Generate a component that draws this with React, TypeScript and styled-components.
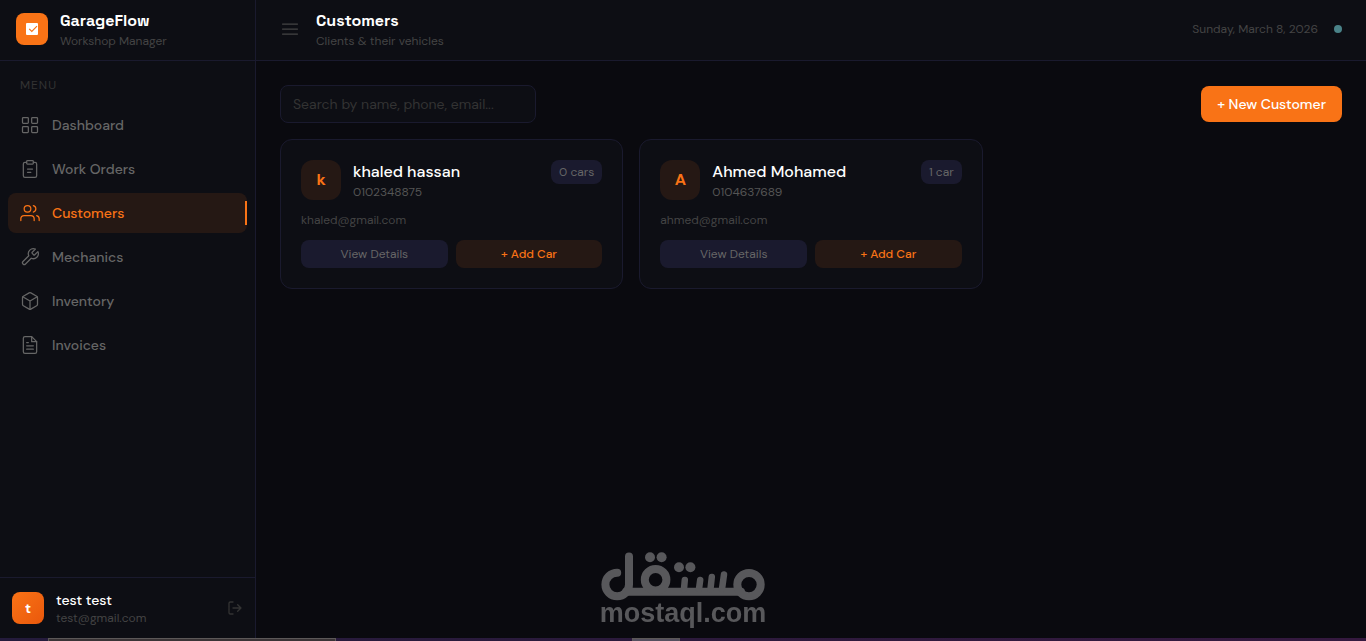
import React from "react";
import styled, { createGlobalStyle } from "styled-components";

const color = {
  page: "#0a0a0f",
  panel: "#0d0e14",
  line: "#1a1a2e",
  orange: "#f97316",
  orangeTint: "#251814",
  white: "#ffffff",
  nav: "#666666",
  muted: "#555555",
  dim: "#444444",
  faint: "#333333",
};

const GlobalStyle = createGlobalStyle`
  *, *::before, *::after { box-sizing: border-box; }
  body {
    margin: 0;
    background: ${color.page};
    color: ${color.white};
    font-family: "DM Sans", Inter, "Liberation Sans", sans-serif;
    font-size: 14px;
    line-height: 20px;
  }
  button, input { font: inherit; }
  button { border: 0; cursor: pointer; }
  h1, h2, p, ul { margin: 0; padding: 0; }
`;

const Shell = styled.div`
  min-height: 100vh;
  display: flex;
  flex-direction: column;
`;

const Workspace = styled.div`
  flex: 1;
  display: flex;
`;

const Sidebar = styled.aside`
  flex: none;
  width: 256px;
  display: flex;
  flex-direction: column;
  background: ${color.panel};
  border-right: 1px solid ${color.line};
`;

const Bar = styled.div`
  height: 61px;
  display: flex;
  align-items: center;
  padding-bottom: 2px;
  border-bottom: 1px solid ${color.line};
`;

const Brand = styled(Bar)`
  gap: 12px;
  padding-left: 16px;
`;

const TopBar = styled(Bar).attrs({ as: "header" })`
  gap: 16px;
  padding-left: 24px;
  padding-right: 24px;
  background: ${color.panel};
`;

const Tile = styled.span<{ $size: number; $tone: "solid" | "gradient" | "tint" }>`
  flex: none;
  width: ${(p) => p.$size}px;
  height: ${(p) => p.$size}px;
  display: flex;
  align-items: center;
  justify-content: center;
  border-radius: ${(p) => (p.$tone === "tint" ? 12 : 8)}px;
  font-size: ${(p) => (p.$tone === "tint" ? 16 : 14)}px;
  font-weight: 700;
  color: ${(p) => (p.$tone === "tint" ? color.orange : color.white)};
  background: ${(p) =>
    p.$tone === "tint"
      ? color.orangeTint
      : p.$tone === "gradient"
        ? "linear-gradient(135deg, #f97316, #ea580c)"
        : color.orange};
`;

const Stack = styled.div`
  flex: 1;
  min-width: 0;
`;

const Heading = styled.h1`
  font-family: "Space Grotesk", "DM Sans", Inter, sans-serif;
  font-size: 16px;
  line-height: 24px;
  font-weight: 600;
`;

const BrandName = styled(Heading).attrs({ as: "p" })`
  font-weight: 700;
`;

const Small = styled.p<{ $color: string }>`
  font-size: 12px;
  line-height: 16px;
  color: ${(p) => p.$color};
`;

const Nav = styled.nav`
  flex: 1;
  padding: 16px 8px;
`;

const NavTitle = styled.p`
  padding: 0 12px;
  margin-bottom: 12px;
  font-size: 12px;
  line-height: 16px;
  letter-spacing: 1px;
  color: ${color.faint};
`;

const NavList = styled.ul`
  display: flex;
  flex-direction: column;
  gap: 4px;
  list-style: none;
`;

const NavLink = styled.a<{ $active: boolean }>`
  position: relative;
  height: 40px;
  display: flex;
  align-items: center;
  gap: 12px;
  padding: 0 12px;
  border-radius: 8px;
  font-weight: 500;
  text-decoration: none;
  color: ${(p) => (p.$active ? color.orange : color.nav)};
  background: ${(p) => (p.$active ? color.orangeTint : "transparent")};
`;

const ActiveMark = styled.span`
  position: absolute;
  top: 8px;
  right: 0;
  width: 2px;
  height: 24px;
  background: ${color.orange};
`;

const Account = styled.div`
  height: 61px;
  display: flex;
  align-items: center;
  gap: 12px;
  padding: 0 12px;
  border-top: 1px solid ${color.line};
`;

const AccountName = styled.p`
  line-height: 20px;
  font-weight: 500;
`;

const IconButton = styled.button<{ $color: string }>`
  display: flex;
  padding: 0;
  background: none;
  color: ${(p) => p.$color};
`;

const Main = styled.div`
  flex: 1;
  min-width: 0;
`;

const StatusDot = styled.span`
  width: 8px;
  height: 8px;
  border-radius: 50%;
  background: #4a8288;
`;

const Content = styled.main`
  padding: 24px;
`;

const Toolbar = styled.div`
  display: flex;
  align-items: center;
  justify-content: space-between;
  margin-bottom: 16px;
`;

const Search = styled.input`
  width: 256px;
  height: 38px;
  padding: 0 12px;
  border: 1px solid ${color.line};
  border-radius: 8px;
  background: ${color.panel};
  color: ${color.white};
  outline: none;
  &::placeholder { color: ${color.faint}; opacity: 1; }
`;

const PrimaryButton = styled.button`
  height: 36px;
  padding: 0 16px;
  border-radius: 8px;
  background: ${color.orange};
  color: ${color.white};
  font-size: 14px;
  font-weight: 500;
`;

const Cards = styled.div`
  display: grid;
  grid-template-columns: repeat(3, 1fr);
  gap: 16px;
`;

const Card = styled.article`
  padding: 20px;
  border: 1px solid ${color.line};
  border-radius: 12px;
  background: ${color.panel};
`;

const CardTop = styled.div`
  display: flex;
  align-items: flex-start;
  gap: 12px;
  margin-bottom: 12px;
`;

const CustomerName = styled.h2`
  font-size: 16px;
  line-height: 24px;
  font-weight: 500;
`;

const Badge = styled.span`
  padding: 4px 8px;
  border-radius: 8px;
  font-size: 12px;
  line-height: 16px;
  color: ${color.nav};
  background: ${color.line};
`;

const Actions = styled.div`
  display: flex;
  gap: 8px;
  margin-top: 12px;
`;

const ActionButton = styled.button<{ $accent?: boolean }>`
  flex: 1;
  height: 28px;
  padding: 0;
  border-radius: 8px;
  font-size: 12px;
  font-weight: ${(p) => (p.$accent ? 500 : 400)};
  color: ${(p) => (p.$accent ? color.orange : color.nav)};
  background: ${(p) => (p.$accent ? color.orangeTint : color.line)};
`;

const Watermark = styled.div`
  position: fixed;
  left: 0;
  right: 0;
  bottom: 17px;
  display: flex;
  flex-direction: column;
  align-items: center;
  pointer-events: none;
  color: #58585b;
  font: 700 27px/22px "Liberation Sans", Arial, sans-serif;
`;

const Taskbar = styled.div`
  height: 3px;
  display: flex;
  background: linear-gradient(90deg, #241b3c, #2c1a3c 50%, #35193f);
`;

const TaskbarSlot = styled.span<{ $left: number; $width: number; $fill: string }>`
  width: ${(p) => p.$width}px;
  margin-left: ${(p) => p.$left}px;
  background: ${(p) => p.$fill};
  border: 1px solid #5c5858;
  border-bottom: 0;
`;

const icons = {
  grid: (
    <>
      <rect x="3" y="3" width="7" height="7" rx="1" />
      <rect x="14" y="3" width="7" height="7" rx="1" />
      <rect x="3" y="14" width="7" height="7" rx="1" />
      <rect x="14" y="14" width="7" height="7" rx="1" />
    </>
  ),
  clipboard: (
    <>
      <path d="M16 4h2a2 2 0 0 1 2 2v14a2 2 0 0 1-2 2H6a2 2 0 0 1-2-2V6a2 2 0 0 1 2-2h2" />
      <rect x="8" y="2" width="8" height="4" rx="1" />
      <path d="M9 12h6M9 16h4" />
    </>
  ),
  users: (
    <>
      <path d="M17 21v-2a4 4 0 0 0-4-4H5a4 4 0 0 0-4 4v2" />
      <circle cx="9" cy="7" r="4" />
      <path d="M23 21v-2a4 4 0 0 0-3-3.87M16 3.13a4 4 0 0 1 0 7.75" />
    </>
  ),
  wrench: (
    <path d="M14.7 6.3a1 1 0 0 0 0 1.4l1.6 1.6a1 1 0 0 0 1.4 0l3.77-3.77a6 6 0 0 1-7.94 7.94l-6.91 6.91a2.12 2.12 0 0 1-3-3l6.91-6.91a6 6 0 0 1 7.94-7.94l-3.76 3.76z" />
  ),
  box: (
    <>
      <path d="M21 16V8a2 2 0 0 0-1-1.73l-7-4a2 2 0 0 0-2 0l-7 4A2 2 0 0 0 3 8v8a2 2 0 0 0 1 1.73l7 4a2 2 0 0 0 2 0l7-4A2 2 0 0 0 21 16z" />
      <path d="M3.27 6.96 12 12.01l8.73-5.05M12 22.08V12" />
    </>
  ),
  file: (
    <>
      <path d="M14 2H6a2 2 0 0 0-2 2v16a2 2 0 0 0 2 2h12a2 2 0 0 0 2-2V8z" />
      <path d="M14 2v6h6M16 13H8M16 17H8M10 9H8" />
    </>
  ),
  menu: <path d="M3 6h18M3 12h18M3 18h18" />,
  logout: <path d="M9 21H5a2 2 0 0 1-2-2V5a2 2 0 0 1 2-2h4M16 17l5-5-5-5M21 12H9" />,
};

function Icon({ name, size = 20 }: { name: keyof typeof icons; size?: number }) {
  return (
    <svg
      width={size}
      height={size}
      viewBox="0 0 24 24"
      fill="none"
      stroke="currentColor"
      strokeWidth={size === 16 ? 2 : 1.5}
      strokeLinecap="round"
      strokeLinejoin="round"
      aria-hidden="true"
    >
      {icons[name]}
    </svg>
  );
}

const links: { label: string; icon: keyof typeof icons }[] = [
  { label: "Dashboard", icon: "grid" },
  { label: "Work Orders", icon: "clipboard" },
  { label: "Customers", icon: "users" },
  { label: "Mechanics", icon: "wrench" },
  { label: "Inventory", icon: "box" },
  { label: "Invoices", icon: "file" },
];

const customers = [
  { name: "khaled hassan", phone: "0102348875", email: "khaled@gmail.com", cars: 0 },
  { name: "Ahmed Mohamed", phone: "0104637689", email: "ahmed@gmail.com", cars: 1 },
];

export default function App() {
  return (
    <Shell>
      <GlobalStyle />
      <Workspace>
        <Sidebar>
          <Brand>
            <Tile $size={32} $tone="solid">
              <svg width="12" height="12" viewBox="0 0 12 12" aria-hidden="true">
                <rect width="12" height="12" rx="1" fill="#fff" />
                <path d="M3.2 5.8 5.8 8.4 11 3.2" fill="none" stroke={color.orange} strokeWidth="1.2" />
              </svg>
            </Tile>
            <Stack>
              <BrandName>GarageFlow</BrandName>
              <Small $color={color.dim}>Workshop Manager</Small>
            </Stack>
          </Brand>
          <Nav>
            <NavTitle>MENU</NavTitle>
            <NavList>
              {links.map((link) => {
                const active = link.label === "Customers";
                return (
                  <li key={link.label}>
                    <NavLink href="#" $active={active} aria-current={active ? "page" : undefined}>
                      <Icon name={link.icon} />
                      {link.label}
                      {active && <ActiveMark />}
                    </NavLink>
                  </li>
                );
              })}
            </NavList>
          </Nav>
          <Account>
            <Tile $size={32} $tone="gradient">t</Tile>
            <Stack>
              <AccountName>test test</AccountName>
              <Small $color={color.dim}>test@gmail.com</Small>
            </Stack>
            <IconButton type="button" aria-label="Log out" $color={color.faint}>
              <Icon name="logout" size={16} />
            </IconButton>
          </Account>
        </Sidebar>
        <Main>
          <TopBar>
            <IconButton type="button" aria-label="Toggle menu" $color={color.dim}>
              <Icon name="menu" />
            </IconButton>
            <Stack>
              <Heading>Customers</Heading>
              <Small $color={color.dim}>Clients &amp; their vehicles</Small>
            </Stack>
            <Small $color={color.dim}>Sunday, March 8, 2026</Small>
            <StatusDot />
          </TopBar>
          <Content>
            <Toolbar>
              <Search type="search" aria-label="Search customers" placeholder="Search by name, phone, email..." />
              <PrimaryButton type="button">+ New Customer</PrimaryButton>
            </Toolbar>
            <Cards>
              {customers.map((c) => (
                <Card key={c.email}>
                  <CardTop>
                    <Tile $size={40} $tone="tint">{c.name[0]}</Tile>
                    <Stack>
                      <CustomerName>{c.name}</CustomerName>
                      <Small $color={color.muted}>{c.phone}</Small>
                    </Stack>
                    <Badge>{c.cars === 1 ? "1 car" : `${c.cars} cars`}</Badge>
                  </CardTop>
                  <Small $color={color.dim}>{c.email}</Small>
                  <Actions>
                    <ActionButton type="button">View Details</ActionButton>
                    <ActionButton type="button" $accent>+ Add Car</ActionButton>
                  </Actions>
                </Card>
              ))}
            </Cards>
          </Content>
        </Main>
      </Workspace>
      <Taskbar>
        <TaskbarSlot $left={48} $width={288} $fill="#3a3436" />
        <TaskbarSlot $left={296} $width={48} $fill="#55505f" />
      </Taskbar>
      <Watermark>
        <svg width="164" height="50" viewBox="0 0 164 50" fill="none" stroke="currentColor" strokeWidth="8" strokeLinecap="round" role="img" aria-label="mostaql logo">
          <path d="M28 4.5V32.5A11.8 11.8 0 1 1 16.2 20.7" />
          <path d="M25 39.7H140" />
          <circle cx="54.6" cy="27.7" r="10.8" />
          <circle cx="148" cy="32.6" r="11.7" />
          <path strokeWidth="6.5" d="M83.8 28L83 37M99.2 28L98 37M110.8 25L109.5 37M123 22.5L121 37" />
          <g fill="currentColor" stroke="none">
            <circle cx="49" cy="5.2" r="5" />
            <circle cx="60.6" cy="5.2" r="5" />
            <circle cx="78" cy="15.3" r="5" />
            <circle cx="89.4" cy="15.3" r="5" />
          </g>
        </svg>
        mostaql.com
      </Watermark>
    </Shell>
  );
}
